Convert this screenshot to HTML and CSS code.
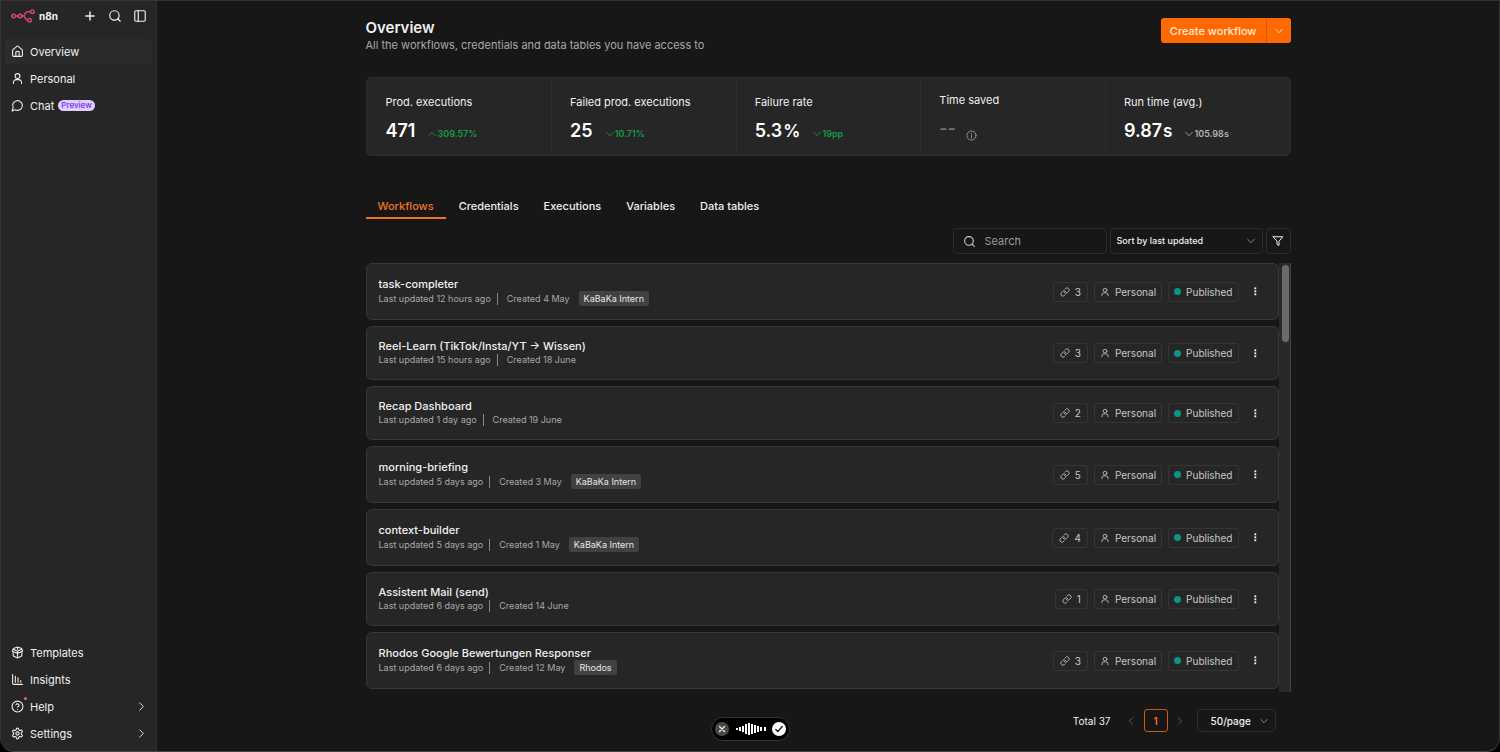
FILE: index.html
```html
<!DOCTYPE html>
<html lang="en">
<head>
    <meta charset="UTF-8">
    <meta name="viewport" content="width=device-width, initial-scale=1.0">
    <title>Overview - n8n</title>
    <link rel="stylesheet" href="styles.css">
</head>
<body>
    <svg class="sprite" aria-hidden="true">
        <symbol id="i-plus" viewBox="0 0 24 24"><path d="M5 12h14M12 5v14"/></symbol>
        <symbol id="i-search" viewBox="0 0 24 24"><circle cx="11" cy="11" r="8"/><path d="m21 21-4.3-4.3"/></symbol>
        <symbol id="i-panel" viewBox="0 0 24 24"><rect x="3" y="3" width="18" height="18" rx="2"/><path d="M9 3v18"/></symbol>
        <symbol id="i-home" viewBox="0 0 24 24"><path d="M15 21v-8a1 1 0 0 0-1-1h-4a1 1 0 0 0-1 1v8"/><path d="M3 10a2 2 0 0 1 .7-1.5l7-6a2 2 0 0 1 2.6 0l7 6A2 2 0 0 1 21 10v9a2 2 0 0 1-2 2H5a2 2 0 0 1-2-2z"/></symbol>
        <symbol id="i-user" viewBox="0 0 24 24"><circle cx="12" cy="7.500" r="4.500"/><path d="M4.500 21v-1.500a5.500 5.500 0 0 1 5.500-5.500h4a5.500 5.500 0 0 1 5.500 5.500V21"/></symbol>
        <symbol id="i-chat" viewBox="0 0 24 24"><path d="M7.900 20A9 9 0 1 0 4 16.100L2 22Z"/></symbol>
        <symbol id="i-box" viewBox="0 0 24 24"><path d="M12 13v8M12 3v3"/><path d="M4 6a2 2 0 0 1 1.400-1.900L11 2.200a3 3 0 0 1 2 0l5.600 1.900A2 2 0 0 1 20 6l1.500 3.500-8 3.500L12 11l-1.500 2-8-3.500z"/><path d="M4 12v5a2 2 0 0 0 1.200 1.900L11 21.700a3 3 0 0 0 2 0l5.800-2.800A2 2 0 0 0 20 17v-5M4.500 6 12 9.500 19.500 6"/></symbol>
        <symbol id="i-chart" viewBox="0 0 24 24"><path d="M3 3v16a2 2 0 0 0 2 2h16M8 17V6M13 17V9M18 17v-3"/></symbol>
        <symbol id="i-help" viewBox="0 0 24 24"><circle cx="12" cy="12" r="10"/><path d="M9.100 9a3 3 0 0 1 5.800 1c0 2-3 3-3 3M12 17h.01"/></symbol>
        <symbol id="i-gear" viewBox="0 0 24 24"><path d="M12.220 2h-.44a2 2 0 0 0-2 2v.18a2 2 0 0 1-1 1.730l-.43.25a2 2 0 0 1-2 0l-.15-.08a2 2 0 0 0-2.730.73l-.22.38a2 2 0 0 0 .73 2.730l.15.1a2 2 0 0 1 1 1.720v.51a2 2 0 0 1-1 1.740l-.15.09a2 2 0 0 0-.73 2.730l.22.38a2 2 0 0 0 2.730.73l.15-.08a2 2 0 0 1 2 0l.43.25a2 2 0 0 1 1 1.730V20a2 2 0 0 0 2 2h.44a2 2 0 0 0 2-2v-.18a2 2 0 0 1 1-1.730l.43-.25a2 2 0 0 1 2 0l.15.08a2 2 0 0 0 2.730-.73l.22-.39a2 2 0 0 0-.73-2.730l-.15-.08a2 2 0 0 1-1-1.740v-.5a2 2 0 0 1 1-1.740l.15-.09a2 2 0 0 0 .73-2.730l-.22-.38a2 2 0 0 0-2.730-.73l-.15.08a2 2 0 0 1-2 0l-.43-.25a2 2 0 0 1-1-1.730V4a2 2 0 0 0-2-2z"/><circle cx="12" cy="12" r="3"/></symbol>
        <symbol id="i-right" viewBox="0 0 24 24"><path d="m8 4 8 8-8 8"/></symbol>
        <symbol id="i-left" viewBox="0 0 24 24"><path d="m16 4-8 8 8 8"/></symbol>
        <symbol id="i-down" viewBox="0 0 24 24"><path d="m4 8 8 8 8-8"/></symbol>
        <symbol id="i-up" viewBox="0 0 24 24"><path d="m4 16 8-8 8 8"/></symbol>
        <symbol id="i-info" viewBox="0 0 24 24"><circle cx="12" cy="12" r="10"/><path d="M12 17v-6M12 7v1"/></symbol>
        <symbol id="i-filter" viewBox="0 0 24 24"><path d="M2.500 3.500h19L14 12.500V21l-4-2.500v-6z"/></symbol>
        <symbol id="i-link" viewBox="0 0 24 24"><path d="M10 13a5 5 0 0 0 7.540.54l3-3a5 5 0 0 0-7.070-7.070l-1.720 1.710"/><path d="M14 11a5 5 0 0 0-7.540-.54l-3 3a5 5 0 0 0 7.070 7.070l1.710-1.710"/></symbol>
        <symbol id="i-dots" viewBox="0 0 24 24"><g fill="currentColor" stroke="none"><rect x="9" y="1" width="5" height="5"/><rect x="9" y="9" width="5" height="5"/><rect x="9" y="17" width="5" height="5"/></g></symbol>
    </svg>

    <div class="app">
        <aside class="sidebar">
            <div class="brand">
                <svg class="logo" viewBox="0 0 24 14"><circle cx="2.500" cy="7" r="1.800"/><circle cx="9" cy="7" r="1.800"/><circle cx="21.300" cy="2.700" r="1.800"/><circle cx="18.500" cy="11.200" r="1.800"/><path d="M4.300 7h2.900M10.800 7h1c3.200 0 1.400-4.300 4.400-4.300h3.300M12 7c3.200 0 1.400 4.200 4.700 4.200"/></svg>
                <span class="brand-name">n8n</span>
                <div class="brand-actions">
                    <button aria-label="Add"><svg class="icon bold"><use href="#i-plus"/></svg></button>
                    <button aria-label="Search"><svg class="icon"><use href="#i-search"/></svg></button>
                    <button aria-label="Toggle sidebar"><svg class="icon"><use href="#i-panel"/></svg></button>
                </div>
            </div>
            <nav class="menu">
                <a href="#" class="active"><svg class="icon"><use href="#i-home"/></svg>Overview</a>
                <a href="#"><svg class="icon"><use href="#i-user"/></svg>Personal</a>
                <a href="#"><svg class="icon"><use href="#i-chat"/></svg>Chat <span class="preview">Preview</span></a>
            </nav>
            <nav class="menu menu-bottom">
                <a href="#"><svg class="icon"><use href="#i-box"/></svg>Templates</a>
                <a href="#"><svg class="icon"><use href="#i-chart"/></svg>Insights</a>
                <a href="#" class="has-dot"><svg class="icon"><use href="#i-help"/></svg>Help<svg class="icon arrow"><use href="#i-right"/></svg></a>
                <a href="#"><svg class="icon"><use href="#i-gear"/></svg>Settings<svg class="icon arrow"><use href="#i-right"/></svg></a>
            </nav>
        </aside>

        <main class="main">
            <div class="content">
                <header class="header">
                    <div>
                        <h1>Overview</h1>
                        <p>All the workflows, credentials and data tables you have access to</p>
                    </div>
                    <div class="create">
                        <button>Create workflow</button>
                        <button class="create-more" aria-label="More"><svg class="icon small"><use href="#i-down"/></svg></button>
                    </div>
                </header>

                <section class="stats">
                    <div class="stat">
                        <span class="stat-label">Prod. executions</span>
                        <div class="stat-value"><strong>471</strong><span class="delta good"><svg class="icon small"><use href="#i-up"/></svg>309.57%</span></div>
                    </div>
                    <div class="stat">
                        <span class="stat-label">Failed prod. executions</span>
                        <div class="stat-value"><strong>25</strong><span class="delta good"><svg class="icon small"><use href="#i-down"/></svg>10.71%</span></div>
                    </div>
                    <div class="stat">
                        <span class="stat-label">Failure rate</span>
                        <div class="stat-value"><strong>5.3<em>%</em></strong><span class="delta good"><svg class="icon small"><use href="#i-down"/></svg>19pp</span></div>
                    </div>
                    <div class="stat stat-empty">
                        <span class="stat-label">Time saved</span>
                        <div class="stat-value"><span class="dashes">--</span><svg class="icon info"><use href="#i-info"/></svg></div>
                    </div>
                    <div class="stat">
                        <span class="stat-label">Run time (avg.)</span>
                        <div class="stat-value"><strong>9.87<em>s</em></strong><span class="delta"><svg class="icon small"><use href="#i-down"/></svg>105.98s</span></div>
                    </div>
                </section>

                <nav class="tabs">
                    <a href="#" class="active">Workflows</a>
                    <a href="#">Credentials</a>
                    <a href="#">Executions</a>
                    <a href="#">Variables</a>
                    <a href="#">Data tables</a>
                </nav>

                <div class="filters">
                    <label class="search">
                        <svg class="icon"><use href="#i-search"/></svg>
                        <input type="text" placeholder="Search" aria-label="Search">
                    </label>
                    <div class="select sort">
                        <select aria-label="Sort"><option>Sort by last updated</option></select>
                        <svg class="icon small"><use href="#i-down"/></svg>
                    </div>
                    <button class="filter" aria-label="Filter"><svg class="icon"><use href="#i-filter"/></svg></button>
                </div>

                <div class="list">
                    <div class="cards">
                        <article class="card tagged">
                            <div class="info-col">
                                <h2>task-completer</h2>
                                <div class="meta"><span class="updated">Last updated 12 hours ago</span><span>Created 4 May</span><span class="tag">KaBaKa Intern</span></div>
                            </div>
                            <span class="badge"><svg class="icon"><use href="#i-link"/></svg>3</span>
                            <span class="badge owner"><svg class="icon"><use href="#i-user"/></svg>Personal</span>
                            <span class="badge status">Published</span>
                            <button class="more" aria-label="Actions"><svg class="icon"><use href="#i-dots"/></svg></button>
                        </article>
                        <article class="card">
                            <div class="info-col">
                                <h2>Reel-Learn (TikTok/Insta/YT → Wissen)</h2>
                                <div class="meta"><span class="updated">Last updated 15 hours ago</span><span>Created 18 June</span></div>
                            </div>
                            <span class="badge"><svg class="icon"><use href="#i-link"/></svg>3</span>
                            <span class="badge owner"><svg class="icon"><use href="#i-user"/></svg>Personal</span>
                            <span class="badge status">Published</span>
                            <button class="more" aria-label="Actions"><svg class="icon"><use href="#i-dots"/></svg></button>
                        </article>
                        <article class="card">
                            <div class="info-col">
                                <h2>Recap Dashboard</h2>
                                <div class="meta"><span class="updated">Last updated 1 day ago</span><span>Created 19 June</span></div>
                            </div>
                            <span class="badge"><svg class="icon"><use href="#i-link"/></svg>2</span>
                            <span class="badge owner"><svg class="icon"><use href="#i-user"/></svg>Personal</span>
                            <span class="badge status">Published</span>
                            <button class="more" aria-label="Actions"><svg class="icon"><use href="#i-dots"/></svg></button>
                        </article>
                        <article class="card tagged">
                            <div class="info-col">
                                <h2>morning-briefing</h2>
                                <div class="meta"><span class="updated">Last updated 5 days ago</span><span>Created 3 May</span><span class="tag">KaBaKa Intern</span></div>
                            </div>
                            <span class="badge"><svg class="icon"><use href="#i-link"/></svg>5</span>
                            <span class="badge owner"><svg class="icon"><use href="#i-user"/></svg>Personal</span>
                            <span class="badge status">Published</span>
                            <button class="more" aria-label="Actions"><svg class="icon"><use href="#i-dots"/></svg></button>
                        </article>
                        <article class="card tagged">
                            <div class="info-col">
                                <h2>context-builder</h2>
                                <div class="meta"><span class="updated">Last updated 5 days ago</span><span>Created 1 May</span><span class="tag">KaBaKa Intern</span></div>
                            </div>
                            <span class="badge"><svg class="icon"><use href="#i-link"/></svg>4</span>
                            <span class="badge owner"><svg class="icon"><use href="#i-user"/></svg>Personal</span>
                            <span class="badge status">Published</span>
                            <button class="more" aria-label="Actions"><svg class="icon"><use href="#i-dots"/></svg></button>
                        </article>
                        <article class="card">
                            <div class="info-col">
                                <h2>Assistent Mail (send)</h2>
                                <div class="meta"><span class="updated">Last updated 6 days ago</span><span>Created 14 June</span></div>
                            </div>
                            <span class="badge"><svg class="icon"><use href="#i-link"/></svg>1</span>
                            <span class="badge owner"><svg class="icon"><use href="#i-user"/></svg>Personal</span>
                            <span class="badge status">Published</span>
                            <button class="more" aria-label="Actions"><svg class="icon"><use href="#i-dots"/></svg></button>
                        </article>
                        <article class="card tagged">
                            <div class="info-col">
                                <h2>Rhodos Google Bewertungen Responser</h2>
                                <div class="meta"><span class="updated">Last updated 6 days ago</span><span>Created 12 May</span><span class="tag">Rhodos</span></div>
                            </div>
                            <span class="badge"><svg class="icon"><use href="#i-link"/></svg>3</span>
                            <span class="badge owner"><svg class="icon"><use href="#i-user"/></svg>Personal</span>
                            <span class="badge status">Published</span>
                            <button class="more" aria-label="Actions"><svg class="icon"><use href="#i-dots"/></svg></button>
                        </article>
                    </div>
                    <div class="scrollbar"><div class="thumb"></div></div>
                </div>

                <footer class="pagination">
                    <span>Total 37</span>
                    <button class="page-arrow" aria-label="Previous page" disabled><svg class="icon small"><use href="#i-left"/></svg></button>
                    <button class="page">1</button>
                    <button class="page-arrow" aria-label="Next page" disabled><svg class="icon small"><use href="#i-right"/></svg></button>
                    <div class="select page-size">
                        <select aria-label="Page size"><option>50/page</option></select>
                        <svg class="icon small"><use href="#i-down"/></svg>
                    </div>
                </footer>
            </div>
        </main>
    </div>

    <!-- dictation overlay -->
    <div class="recorder">
        <button class="cancel" aria-label="Cancel"><svg class="icon" viewBox="0 0 24 24"><path d="m6 6 12 12M18 6 6 18"/></svg></button>
        <svg class="wave" viewBox="0 0 30 14"><path d="M1 6v2M4 5v4M7 4v6M10 2v10M13 1v12M16 2v10M19 3v8M22 4v6M25 5v4M29 5v4"/></svg>
        <button class="confirm" aria-label="Confirm"><svg class="icon" viewBox="0 0 24 24"><path d="m4 13 5 5L20 6"/></svg></button>
    </div>
</body>
</html>
```
FILE: styles.css
```css
* {
    box-sizing: border-box;
}

body {
    margin: 0;
    background: #000;
    color: #f0f0f0;
    font-family: Inter, sans-serif;
    font-size: 11px;
    line-height: 16px;
}

h1, h2, p {
    margin: 0;
}

a {
    color: inherit;
    text-decoration: none;
}

button, input, select {
    padding: 0;
    border: none;
    background: none;
    color: inherit;
    font: inherit;
}

button {
    display: flex;
    align-items: center;
    justify-content: center;
    cursor: pointer;
}

.sprite {
    position: absolute;
    width: 0;
    height: 0;
}

.icon {
    flex: none;
    width: 13px;
    height: 13px;
    fill: none;
    stroke: currentColor;
    stroke-width: 2;
    stroke-linecap: round;
    stroke-linejoin: round;
}

.icon.bold {
    stroke-width: 2.5;
}

.icon.small {
    width: 10px;
    height: 10px;
}

.app {
    display: flex;
    min-height: 100vh;
    border: 1px solid #343434;
    border-bottom-color: #454545;
    border-radius: 0 0 14px 14px;
    background: #171717;
    overflow: hidden;
}

/* sidebar */
.sidebar {
    flex: none;
    display: flex;
    flex-direction: column;
    width: 156px;
    padding: 5px 4px;
    border-right: 1px solid #303030;
    background: #262626;
}

.brand {
    display: flex;
    align-items: center;
    height: 20px;
    padding: 0 5px 0 6px;
}

.logo {
    width: 24px;
    height: 14px;
    fill: none;
    stroke: #d9486b;
    stroke-width: 1.4;
}

.brand-name {
    margin-left: 4px;
    font-size: 10px;
    font-weight: 700;
}

.brand-actions {
    display: flex;
    gap: 11px;
    margin-left: auto;
}

.brand-actions .icon {
    width: 14px;
    height: 14px;
}

.menu {
    display: flex;
    flex-direction: column;
    gap: 2px;
    margin-top: 13px;
}

.menu-bottom {
    margin-top: auto;
}

.menu a {
    position: relative;
    display: flex;
    align-items: center;
    gap: 6px;
    height: 25px;
    padding: 0 5px 0 6px;
    border-radius: 3px;
}

.menu a.active {
    background: #2b2b2b;
}

.menu .arrow {
    width: 11px;
    height: 11px;
    margin-left: auto;
}

.has-dot::after {
    content: "";
    position: absolute;
    top: 3px;
    left: 19px;
    width: 3px;
    height: 3px;
    border-radius: 50%;
    background: #f0616a;
}

.preview {
    margin-left: -2px;
    padding: 0 3px;
    border-radius: 6px;
    background: #dccfff;
    color: #7c2df0;
    font-size: 8px;
    font-weight: 500;
    line-height: 11px;
}

/* page */
.main {
    flex: 1;
    min-width: 0;
    padding: 0 24px;
}

.content {
    max-width: 925px;
    margin: 0 auto;
    padding-top: 17px;
}

.header {
    display: flex;
    align-items: flex-start;
    justify-content: space-between;
}

h1 {
    font-size: 15px;
    font-weight: 600;
    line-height: 19px;
}

.header p {
    color: #a8a8a8;
}

.create {
    display: flex;
    height: 25px;
    border-radius: 3px;
    background: #ff6900;
    color: #ffeadb;
    font-weight: 500;
}

.create button {
    padding: 0 9px;
}

.create .create-more {
    width: 25px;
    padding: 0;
    border-left: 1px solid #d65800;
}

.stats {
    display: grid;
    grid-template-columns: repeat(5, 1fr);
    margin-top: 24px;
    border: 1px solid #2d2d2d;
    border-radius: 5px;
    background: #262626;
}

.stat {
    height: 77px;
    padding: 16px 0 0 18px;
    border-left: 1px solid #2d2d2d;
}

.stat:first-child {
    border-left-color: transparent;
}

.stat-value {
    display: flex;
    align-items: flex-end;
    gap: 12px;
    margin-top: 9px;
}

.stat-value strong {
    color: #fff;
    font-size: 18px;
    font-weight: 600;
    line-height: 24px;
}

.stat-value em {
    margin-left: 1px;
    font-size: 17px;
    font-style: normal;
}

.delta {
    display: flex;
    align-items: center;
    padding-bottom: 1px;
    color: #b5b5b5;
    font-size: 9px;
    font-weight: 600;
}

.delta.good {
    color: #159a45;
}

.stat-empty {
    padding-top: 14px;
}

.dashes {
    color: #777;
    font-size: 18px;
    font-weight: 500;
    line-height: 24px;
}

.stat .info {
    width: 11px;
    height: 11px;
    margin-left: -2px;
    color: #999;
}

.tabs {
    display: flex;
    gap: 1px;
    margin-top: 40px;
}

.tabs a {
    padding: 2px 12px 3px;
    border-bottom: 2px solid transparent;
    font-weight: 500;
}

.tabs a.active {
    border-color: #f07320;
    color: #f07320;
}

.filters {
    display: flex;
    justify-content: flex-end;
    gap: 3px;
    margin-top: 9px;
}

.search, .select, .filter {
    display: flex;
    align-items: center;
    height: 26px;
    border: 1px solid #2c2c2c;
    border-radius: 4px;
}

.search {
    gap: 9px;
    width: 154px;
    padding: 0 9px;
    color: #ccc;
}

.search input {
    width: 100%;
    outline: none;
}

.search input::placeholder {
    color: #999;
}

.select {
    position: relative;
    font-weight: 500;
}

.select select {
    width: 100%;
    height: 100%;
    padding-left: 6px;
    appearance: none;
}

.select .icon {
    position: absolute;
    right: 6px;
    color: #999;
    pointer-events: none;
}

.sort {
    width: 153px;
    font-size: 9px;
}

.filter {
    width: 25px;
}

.filter .icon {
    width: 12px;
    height: 12px;
}

/* workflow list */
.list {
    display: flex;
    margin-top: 9px;
}

.cards {
    flex: 1;
    display: flex;
    flex-direction: column;
    gap: 6px;
    padding-bottom: 3px;
}

.card {
    display: flex;
    align-items: center;
    gap: 6px;
    height: 54px;
    padding: 0 11px 0 12px;
    border: 1px solid #383838;
    border-radius: 6px;
    background: #262626;
}

.card.tagged {
    height: 57px;
}

.info-col {
    flex: 1;
}

.card h2 {
    font-size: 11px;
    font-weight: 500;
    line-height: 14px;
}

.meta {
    display: flex;
    align-items: center;
    color: #a8a8a8;
    font-size: 9px;
    line-height: 14px;
}

.tagged .meta {
    line-height: 15px;
}

.updated {
    margin-right: 9px;
    padding-right: 6px;
    border-right: 1px solid #888;
    line-height: 12px;
}

.tag {
    margin-left: 9px;
    padding: 0 5px;
    border-radius: 2px;
    background: #414141;
    color: #e8e8e8;
}

.badge {
    display: flex;
    align-items: center;
    gap: 5px;
    height: 20px;
    padding: 0 6px;
    border: 1px solid #353535;
    border-radius: 3px;
    color: #c8c8c8;
    font-size: 10px;
}

.badge.owner, .badge.status {
    padding: 0 5px;
}

.badge .icon {
    width: 10px;
    height: 10px;
}

.badge.status::before {
    content: "";
    width: 7px;
    height: 7px;
    border-radius: 50%;
    background: #0d9488;
}

.more {
    width: 22px;
    height: 20px;
}

.more .icon {
    width: 9px;
    height: 9px;
}

.scrollbar {
    width: 12px;
    padding: 2px 1px 2px 3px;
    border-right: 1px solid #444;
    background: #292929;
}

.thumb {
    height: 77px;
    border-radius: 4px;
    background: #6b6b6b;
}

.pagination {
    display: flex;
    align-items: center;
    justify-content: flex-end;
    margin-top: 17px;
    padding-right: 15px;
    font-size: 10px;
}

.page-arrow {
    width: 23px;
    color: #666;
}

.pagination span {
    margin-right: 9px;
}

.page {
    width: 24px;
    height: 23px;
    margin: 0 1px;
    border: 1px solid #c45c14;
    border-radius: 3px;
    color: #f07320;
    font-weight: 600;
}

.page-size {
    width: 79px;
    height: 23px;
    margin-left: 5px;
}

.page-size select {
    padding-left: 13px;
}

/* floating recorder pill */
.recorder {
    position: fixed;
    bottom: 11px;
    left: 50%;
    display: flex;
    align-items: center;
    justify-content: space-between;
    width: 79px;
    height: 24px;
    margin-left: -39px;
    padding: 0 3px;
    border: 1px solid #333;
    border-radius: 12px;
    background: #000;
}

.recorder button {
    width: 14px;
    height: 14px;
    border-radius: 50%;
    background: #4b4943;
}

.recorder .confirm {
    background: #fff;
    color: #111;
}

.recorder .icon {
    width: 10px;
    height: 10px;
    stroke-width: 3;
}

.wave {
    width: 30px;
    height: 14px;
    stroke: #fff;
    stroke-width: 2;
}
```
